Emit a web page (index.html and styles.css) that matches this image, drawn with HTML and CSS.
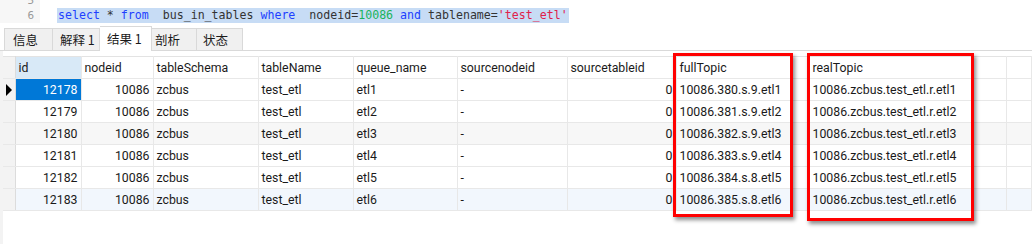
FILE: index.html
```html
<!DOCTYPE html>
<html lang="zh-CN">
<head>
  <meta charset="UTF-8">
  <title>查询结果</title>
  <link rel="stylesheet" href="styles.css">
</head>
<body>
  <!-- SQL 编辑器 -->
  <div class="editor">
    <div class="line">
      <span class="num">5</span>
      <span class="code"></span>
    </div>
    <div class="line">
      <span class="num">6</span>
      <span class="code selected"><span class="kw">select</span> * <span class="kw">from</span>  bus_in_tables <span class="kw">where</span>  nodeid=<span class="n">10086</span> <span class="kw">and</span> tablename=<span class="s">'test_etl'</span></span>
    </div>
  </div>

  <div class="panel">
    <!-- 结果标签 -->
    <div class="tabs">
      <div class="tab t-info">信息</div>
      <div class="tab t-explain">解释 1</div>
      <div class="tab t-result active">结果 1</div>
      <div class="tab t-profile">剖析</div>
      <div class="tab t-status">状态</div>
    </div>

    <!-- 结果表格 -->
    <div class="grid-wrap">
      <table class="grid">
        <colgroup>
          <col style="width:12px">
          <col style="width:66px">
          <col style="width:72px">
          <col style="width:105px">
          <col style="width:95px">
          <col style="width:104px">
          <col style="width:110px">
          <col style="width:109px">
          <col style="width:133px">
          <col style="width:197px">
          <col>
        </colgroup>
        <thead>
          <tr>
            <th class="ind"></th>
            <th class="cur">id</th>
            <th>nodeid</th>
            <th>tableSchema</th>
            <th>tableName</th>
            <th>queue_name</th>
            <th>sourcenodeid</th>
            <th>sourcetableid</th>
            <th>fullTopic</th>
            <th>realTopic</th>
            <th></th>
          </tr>
        </thead>
        <tbody id="rows"></tbody>
      </table>

      <!-- 标注框 -->
      <div class="mark mark-full"></div>
      <div class="mark mark-real"></div>
    </div>
  </div>

  <script>
    const data = [
      [12178, "etl1", "380.s.9"],
      [12179, "etl2", "381.s.9"],
      [12180, "etl3", "382.s.9"],
      [12181, "etl4", "383.s.9"],
      [12182, "etl5", "384.s.8"],
      [12183, "etl6", "385.s.8"]
    ];
    const tbody = document.getElementById("rows");
    data.forEach((r, i) => {
      const tr = document.createElement("tr");
      if (i === 2) tr.className = "alt";
      if (i === 5) tr.className = "hover";
      tr.innerHTML =
        '<td class="ind">' + (i === 0 ? '<span class="arrow"></span>' : '') + '</td>' +
        '<td class="r' + (i === 0 ? ' sel' : '') + '">' + r[0] + '</td>' +
        '<td class="r">10086</td>' +
        '<td>zcbus</td>' +
        '<td>test_etl</td>' +
        '<td>' + r[1] + '</td>' +
        '<td>-</td>' +
        '<td class="r">0</td>' +
        '<td>10086.' + r[2] + '.' + r[1] + '</td>' +
        '<td>10086.zcbus.test_etl.r.' + r[1] + '</td>' +
        '<td></td>';
      tbody.appendChild(tr);
    });
  </script>
</body>
</html>
```

FILE: styles.css
```css
/* 全体 */
body {
  margin: 0;
  background: #fff;
  font-family: Roboto, "Noto Sans CJK SC", sans-serif;
  font-size: 12.3px;
  color: #1a1a1a;
  overflow: hidden;
}

/* 编辑器 */
.editor {
  height: 25px;
  overflow: hidden;
  font-family: "DejaVu Sans Mono", monospace;
  font-size: 11.6px;
}
.line {
  display: flex;
  height: 15px;
  line-height: 15px;
}
.line:first-child {
  margin-top: -7px;
}
.num {
  width: 34px;
  padding-right: 6px;
  text-align: right;
  color: #999;
  background: #f7f7f7;
  font-size: 11px;
}
.code {
  color: #333;
  white-space: pre;
}
.code.selected {
  margin-left: 17px;
  padding-left: 1px;
  padding-right: 1px;
  background: #c7dcf5;
}
.kw { color: #2040ff; }
.n { color: #19b35c; }
.s { color: #e0204a; }

/* 标签 */
.panel {
  padding-left: 3px;
  background: #f3f3f3;
}
.tabs {
  display: flex;
  height: 24px;
  margin-left: -3px;
  padding: 1px 0 0 4px;
  border-bottom: 1px solid #d9d9d9;
  background: #fff;
  font-family: "Noto Sans CJK SC", sans-serif;
  font-size: 12.5px;
}
.tab {
  box-sizing: border-box;
  height: 22px;
  margin-top: 2px;
  padding-left: 7px;
  line-height: 21px;
  border: 1px solid #d9d9d9;
  border-left: none;
  border-bottom: none;
  background: #f0f0f0;
}
.t-info { width: 49px; padding-left: 8px; border-left: 1px solid #d9d9d9; }
.t-explain { width: 47px; }
.t-result { width: 52px; }
.t-profile { width: 45px; padding-left: 3px; }
.t-status { width: 46px; padding-left: 6px; }
.tab.active {
  height: 25px;
  margin-top: 0;
  margin-bottom: -1px;
  line-height: 23px;
  background: #fff;
}

/* 表格 */
.grid-wrap {
  position: relative;
  height: 194px;
  padding-top: 5px;
  background: #fff;
}
.grid {
  table-layout: fixed;
  border-collapse: collapse;
  width: 1029px;
}
.grid th,
.grid td {
  height: 21px;
  padding: 0 3px;
  border: 1px solid #e8e8e8;
  white-space: nowrap;
  overflow: hidden;
  text-align: left;
  font-weight: normal;
}
.grid th {
  border-top: 1px solid #e3e3e3;
}
.grid th.cur {
  background: #d8e9f7;
}
.grid .ind {
  padding: 0;
  background: #f3f3f3;
  border-left: none;
  border-right: 1px solid #dcdcdc;
}
.grid td.r {
  text-align: right;
}
.grid td.sel {
  background: #0078d7;
  color: #fff;
}
.grid tr.alt td { background: #f7f7f7; }
.grid tr.hover td { background: #f2f7fd; }
.grid tr.alt td.ind,
.grid tr.hover td.ind { background: #f3f3f3; }
.arrow {
  display: block;
  width: 0;
  height: 0;
  margin-left: 3px;
  border-top: 6px solid transparent;
  border-bottom: 6px solid transparent;
  border-left: 6px solid #000;
}

/* 红色标注框 */
.mark {
  position: absolute;
  top: 2px;
  border: 3px solid #f00;
  box-shadow: 2px 3px 4px rgba(0, 0, 0, 0.45);
}
.mark-full {
  left: 670px;
  width: 114px;
  height: 158px;
}
.mark-real {
  left: 804px;
  width: 161px;
  height: 162px;
}
```
